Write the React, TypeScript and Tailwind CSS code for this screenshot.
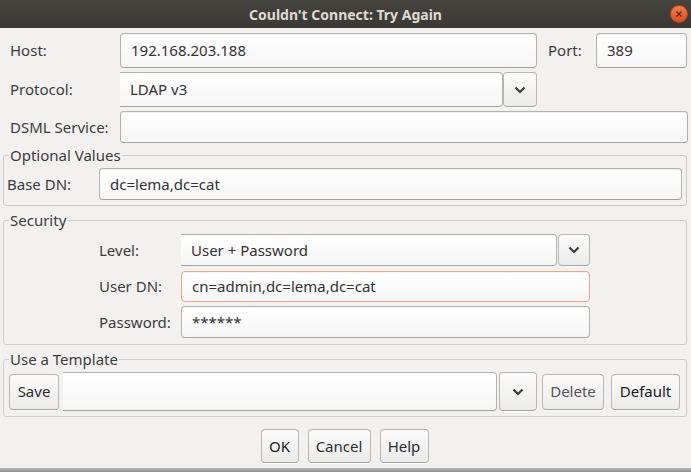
const font = { fontFamily: '"Noto Sans", "DejaVu Sans", sans-serif' };

const fieldBase =
  "flex items-center px-[10px] text-[15px] text-[#333] bg-gradient-to-b from-white to-[#f6f6f6]";

const Field = ({ className, value, orange }: { className: string; value?: string; orange?: boolean }) => (
  <div
    className={`${fieldBase} border rounded-[4px] shadow-[inset_0_1px_1px_rgba(0,0,0,0.06)] ${
      orange ? "border-[#eda58c]" : "border-[#b3b2ae] border-b-[#a3a29f]"
    } ${className}`}
  >
    {value}
  </div>
);

const ComboField = ({ className, value }: { className: string; value?: string }) => (
  <div
    className={`${fieldBase} border-y border-r border-[#b3b2ae] border-b-[#a3a29f] rounded-r-[4px] ${className}`}
  >
    {value}
  </div>
);

const Chevron = () => (
  <svg width="12" height="8" viewBox="0 0 12 8">
    <polyline points="1.5,1.5 6,6 10.5,1.5" fill="none" stroke="#3d3d3d" strokeWidth="2.2" />
  </svg>
);

const btnBase =
  "flex items-center justify-center border border-[#b8b7b3] border-b-[#a5a4a0] rounded-[4px] bg-gradient-to-b from-[#fbfbfb] to-[#ebebea] shadow-[0_1px_0_rgba(255,255,255,0.8)] text-[15px]";

const DropBtn = ({ className }: { className: string }) => (
  <div className={`${btnBase} ${className}`}>
    <Chevron />
  </div>
);

const Btn = ({ className, label, color }: { className: string; label: string; color?: string }) => (
  <div className={`${btnBase} ${color ?? "text-[#2e2e2e]"} ${className}`}>{label}</div>
);

const Group = ({ title, className, children }: { title: string; className: string; children: React.ReactNode }) => (
  <fieldset className={`mx-[3px] w-[684px] border border-[#cdccc8] rounded-[3px] ${className}`}>
    <legend className="ml-[5px] px-[1px] text-[15px] leading-[18px] text-[#3c3c3c]">{title}</legend>
    {children}
  </fieldset>
);

export default function App() {
  return (
    <div style={font} className="w-[691px] h-[472px] bg-[#f2f1f0] flex flex-col overflow-hidden text-[#3c3c3c]">
      <div className="relative h-[28px] shrink-0 bg-gradient-to-b from-[#45443f] to-[#3a3935] flex items-center justify-center">
        <span className="text-[14px] font-bold text-[#dfdbd2]">Couldn't Connect: Try Again</span>
        <div className="absolute right-[3px] top-[5px] w-[18px] h-[18px] rounded-full bg-gradient-to-b from-[#f37c4c] to-[#de4c17] border border-[#b8461b] flex items-center justify-center">
          <svg width="8" height="8" viewBox="0 0 8 8">
            <path d="M1.5 1.5 L6.5 6.5 M6.5 1.5 L1.5 6.5" stroke="#5a2a14" strokeWidth="1.3" />
          </svg>
        </div>
      </div>

      <div className="mt-[5px] h-[35px] flex items-center">
        <div className="w-[120px] pl-[10px] text-[15px]">Host:</div>
        <Field className="w-[417px] h-[35px]" value="192.168.203.188" />
        <div className="w-[59px] pl-[11px] text-[15px]">Port:</div>
        <Field className="w-[91px] h-[35px]" value="389" />
      </div>

      <div className="mt-[4px] h-[35px] flex items-center">
        <div className="w-[120px] pl-[10px] text-[15px]">Protocol:</div>
        <ComboField className="w-[383px] h-[35px]" value="LDAP v3" />
        <DropBtn className="w-[34px] h-[35px]" />
      </div>

      <div className="mt-[4px] h-[32px] flex items-center">
        <div className="w-[120px] pl-[10px] text-[15px]">DSML Service:</div>
        <Field className="w-[568px] h-[32px]" />
      </div>

      <Group title="Optional Values" className="mt-[3px] pt-[4px] pb-[5px]">
        <div className="flex items-center h-[32px]">
          <div className="w-[95px] pl-[3px] text-[15px]">Base DN:</div>
          <Field className="w-[583px] h-[32px]" value="dc=lema,dc=cat" />
        </div>
      </Group>

      <Group title="Security" className="mt-[5px] pt-[5px] pb-[6px]">
        <div className="flex items-center h-[32px]">
          <div className="w-[177px] pl-[95px] text-[15px]">Level:</div>
          <ComboField className="w-[376px] h-[32px]" value="User + Password" />
          <DropBtn className="ml-[1px] w-[32px] h-[32px]" />
        </div>
        <div className="mt-[5px] flex items-center h-[31px]">
          <div className="w-[177px] pl-[95px] text-[15px]">User DN:</div>
          <Field className="w-[409px] h-[31px]" value="cn=admin,dc=lema,dc=cat" orange />
        </div>
        <div className="mt-[4px] flex items-center h-[32px]">
          <div className="w-[177px] pl-[95px] text-[15px]">Password:</div>
          <Field className="w-[409px] h-[32px]" value="******" />
        </div>
      </Group>

      <Group title="Use a Template" className="mt-[5px] pt-[4px] pb-[5px]">
        <div className="flex items-center h-[39px]">
          <Btn className="ml-[5px] w-[50px] h-[36px]" label="Save" />
          <ComboField className="ml-[4px] w-[434px] h-[39px]" />
          <DropBtn className="ml-[2px] w-[38px] h-[39px]" />
          <Btn className="ml-[5px] w-[62px] h-[36px]" label="Delete" color="text-[#555]" />
          <Btn className="ml-[7px] w-[69px] h-[36px]" label="Default" color="text-[#1a1a1a]" />
        </div>
      </Group>

      <div className="mt-[12px] flex justify-center gap-[9px] pr-[2px]">
        <Btn className="w-[38px] h-[34px]" label="OK" color="text-[#1a1a1a]" />
        <Btn className="w-[63px] h-[34px]" label="Cancel" />
        <Btn className="w-[49px] h-[34px]" label="Help" />
      </div>

      <div className="mt-auto h-[4px] bg-gradient-to-b from-[#b9b9b9] to-[#8e8e8e]" />
    </div>
  );
}
